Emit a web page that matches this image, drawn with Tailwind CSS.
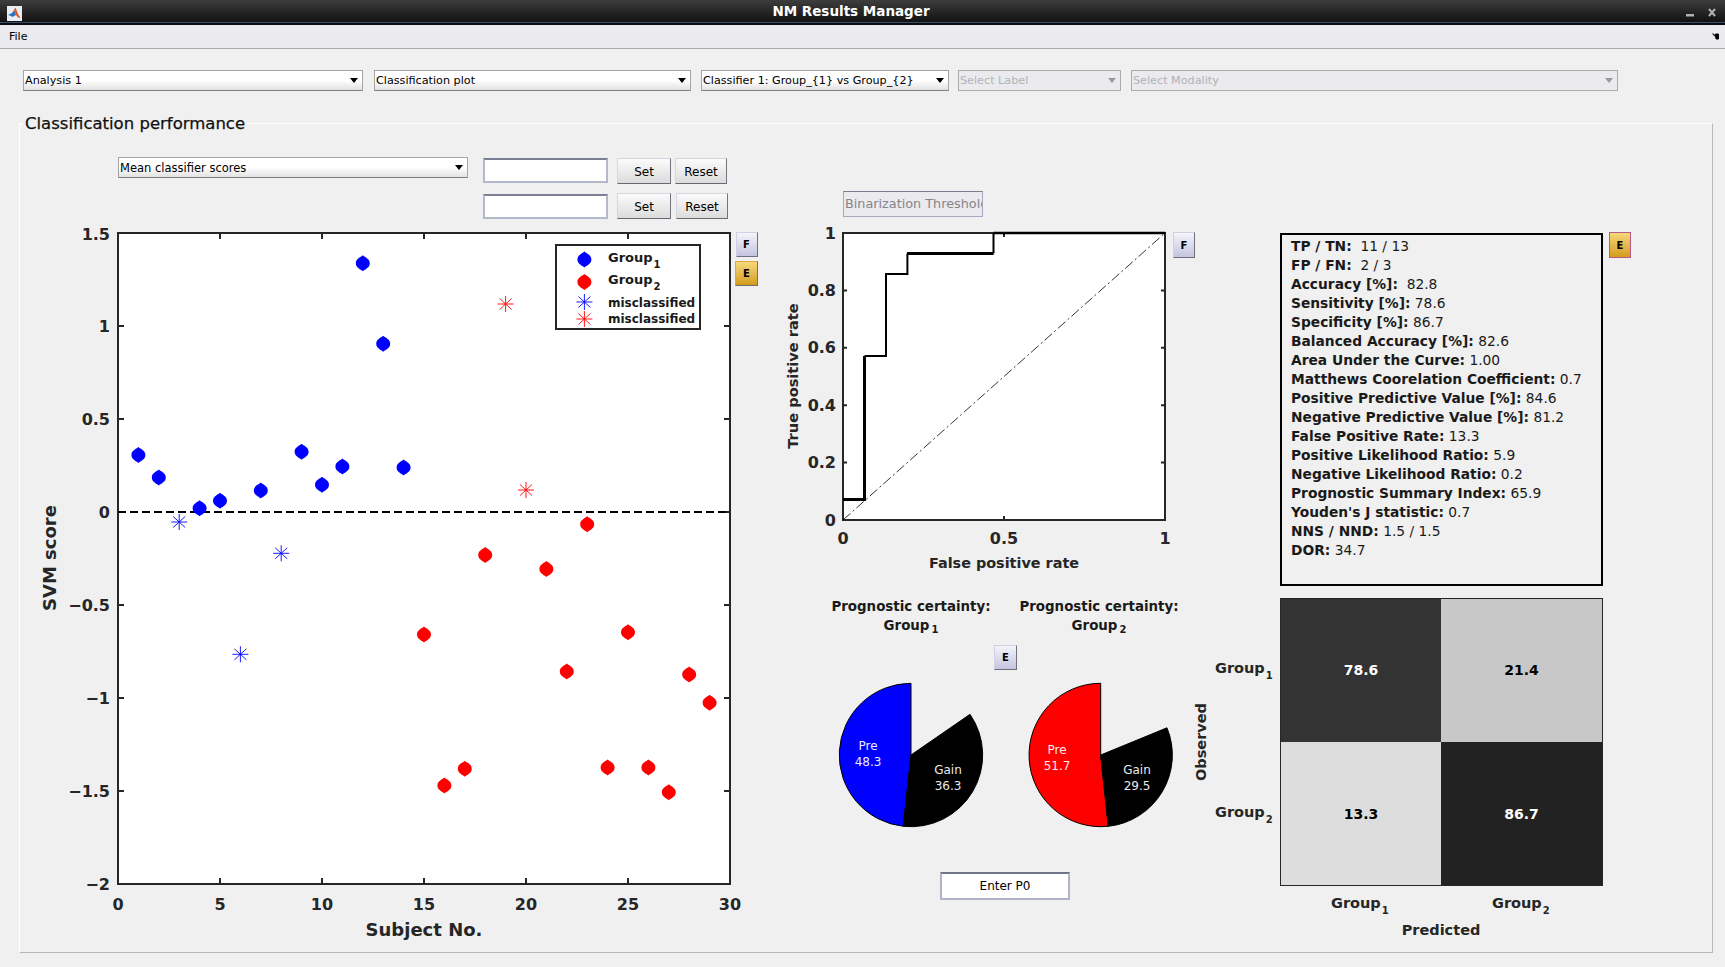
<!DOCTYPE html>
<html lang="en">
<head>
<meta charset="utf-8">
<title>NM Results Manager</title>
<script src="https://cdn.jsdelivr.net/npm/@tailwindcss/browser@4"></script>
</head>
<body class="w-[1725px] h-[967px] overflow-hidden bg-[#f0f0f0] text-black font-['DejaVu_Sans',sans-serif]">

<!-- title bar -->
<header class="relative flex items-center justify-center h-[25px] pr-[23px] pt-[1px] bg-linear-to-b from-[#3e3e3e] to-[#101010] border-b-2 border-b-[#0a0a0a] shadow-[inset_0_-1px_0_#34506e]">
  <div class="absolute left-[7px] top-[6px] w-[15px] h-[15px] bg-[#e8eef6]">
    <svg viewBox="0 0 15 15" class="w-[15px] h-[15px]"><path d="M1 9 L5 7 L7 4 L9 9 L5.5 11 L4 10Z" fill="#2f6fc0"/><path d="M7 4 L8.5 1.5 L11 8 L13.5 12 L11 11.5 L9 9Z" fill="#e2561c"/></svg>
  </div>
  <h1 class="text-[13.5px] leading-none font-bold text-white">NM Results Manager</h1>
  <div class="absolute right-[9px] top-[8px] flex items-end gap-[14px]">
    <svg viewBox="0 0 8 9" class="w-[8px] h-[9px]"><rect x="0" y="6" width="8" height="2.5" fill="#b0b0b0"/></svg>
    <svg viewBox="0 0 8 9" class="w-[8px] h-[9px]"><path d="M1 1 L7 8 M7 1 L1 8" stroke="#b0b0b0" stroke-width="2"/></svg>
  </div>
</header>

<!-- menu bar -->
<nav class="flex items-center justify-between h-[24px] pl-[9px] pr-[6px] bg-[#ebeaee] border-b border-b-[#a8a8a8] text-[11px]">
  <span class="pt-[2px]">File</span>
  <svg viewBox="0 0 7 7" class="w-[7px] h-[7px]"><path d="M0.5 1 L3.5 3.5 M3.5 1 L6.5 1 L6.5 6 L4 6Z M1 0.5 L5 4.5" stroke="#000" stroke-width="1" fill="#000"/></svg>
</nav>

<!-- selector row -->
<div class="flex mt-[21px] ml-[23px] text-[11.2px]">
  <div class="flex items-center justify-between w-[340px] h-[21px] pl-[1px] pr-[4px] bg-linear-to-b from-white via-white to-[#e2e2e2] border border-[#a4a4a4] border-b-[#808080]">
    <span class="pt-[2px]">Analysis 1</span>
    <svg viewBox="0 0 8 5" class="w-[8px] h-[5px]"><path d="M0 0H8L4 5Z" fill="#000"/></svg>
  </div>
  <div class="flex items-center justify-between w-[317px] h-[21px] ml-[11px] pl-[1px] pr-[4px] bg-linear-to-b from-white via-white to-[#e2e2e2] border border-[#a4a4a4] border-b-[#808080]">
    <span class="pt-[2px]">Classification plot</span>
    <svg viewBox="0 0 8 5" class="w-[8px] h-[5px]"><path d="M0 0H8L4 5Z" fill="#000"/></svg>
  </div>
  <div class="flex items-center justify-between w-[248px] h-[21px] ml-[10px] pl-[1px] pr-[4px] bg-linear-to-b from-white via-white to-[#e2e2e2] border border-[#a4a4a4] border-b-[#808080]">
    <span class="pt-[2px]">Classifier 1: Group_{1} vs Group_{2}</span>
    <svg viewBox="0 0 8 5" class="w-[8px] h-[5px]"><path d="M0 0H8L4 5Z" fill="#000"/></svg>
  </div>
  <div class="flex items-center justify-between w-[163px] h-[21px] ml-[9px] pl-[1px] pr-[4px] bg-[#ebeaee] border border-[#ababab] text-[#b2b2b6]">
    <span class="pt-[2px]">Select Label</span>
    <svg viewBox="0 0 8 5" class="w-[8px] h-[5px]"><path d="M0 0H8L4 5Z" fill="#9a9a9e"/></svg>
  </div>
  <div class="flex items-center justify-between w-[487px] h-[21px] ml-[10px] pl-[1px] pr-[4px] bg-[#ebeaee] border border-[#ababab] text-[#b2b2b6]">
    <span class="pt-[2px]">Select Modality</span>
    <svg viewBox="0 0 8 5" class="w-[8px] h-[5px]"><path d="M0 0H8L4 5Z" fill="#9a9a9e"/></svg>
  </div>
</div>

<!-- panel -->
<section class="relative flex w-[1694px] h-[830px] mt-[32px] ml-[19px] border border-t-white border-l-white border-r-[#b8b8b8] border-b-[#b8b8b8]">
  <h2 class="absolute left-[3px] top-[-9px] px-[2px] bg-[#f0f0f0] text-[16.5px] leading-[18px] text-[#101010] [-webkit-text-stroke:0.25px_#101010]">Classification performance</h2>

  <!-- column 1 -->
  <div class="w-[755px] shrink-0 pt-[33px]">
    <div class="flex items-start ml-[98px]">
      <div class="flex items-center justify-between w-[350px] h-[21px] pl-[1px] pr-[4px] text-[11.5px] bg-linear-to-b from-white via-white to-[#e2e2e2] border border-[#a4a4a4] border-b-[#808080]">
        <span class="pt-[2px]">Mean classifier scores</span>
        <svg viewBox="0 0 8 5" class="w-[8px] h-[5px]"><path d="M0 0H8L4 5Z" fill="#000"/></svg>
      </div>
      <div class="w-[125px] h-[25px] ml-[15px] mt-[1px] bg-white border-2 border-[#b4b8cc] border-t-[#7c8094]"></div>
      <button class="w-[54px] h-[26px] ml-[9px] mt-[1px] pt-[1px] text-[12px] bg-linear-to-b from-[#fbfbfb] to-[#dcdcdc] border border-[#d6d6e0] border-r-[#74747e] border-b-[#686872]">Set</button>
      <button class="w-[52px] h-[26px] ml-[4px] mt-[1px] pt-[1px] text-[12px] bg-linear-to-b from-[#fbfbfb] to-[#dcdcdc] border border-[#d6d6e0] border-r-[#74747e] border-b-[#686872]">Reset</button>
    </div>
    <div class="flex items-start ml-[463px] mt-[9px]">
      <div class="w-[125px] h-[25px] mt-[1px] bg-white border-2 border-[#b4b8cc] border-t-[#7c8094]"></div>
      <button class="w-[54px] h-[26px] ml-[9px] pt-[1px] text-[12px] bg-linear-to-b from-[#fbfbfb] to-[#dcdcdc] border border-[#d6d6e0] border-r-[#74747e] border-b-[#686872]">Set</button>
      <button class="w-[52px] h-[26px] ml-[5px] pt-[1px] text-[12px] bg-linear-to-b from-[#fbfbfb] to-[#dcdcdc] border border-[#d6d6e0] border-r-[#74747e] border-b-[#686872]">Reset</button>
    </div>
    <div class="flex items-start mt-[6px]">
      <svg viewBox="20 225 715 725" class="w-[715px] h-[725px] shrink-0 overflow-visible">
        <defs>
          <path id="dot" d="M0-8C1-6.5 7-5 7 0C7 5 1 6.5 0 8C-1 6.5-7 5-7 0C-7-5-1-6.5 0-8Z"/>
          <path id="star" d="M0-8V8M-8 0H8M-6-5.5L6 5.5M-6 5.5L6-5.5" fill="none" stroke-width="0.9"/>
        </defs>
        <rect x="118" y="233" width="612" height="651" fill="#fff" stroke="#262626" stroke-width="2"/>
        <path d="M220 233v6M322 233v6M424 233v6M526 233v6M628 233v6M220 884v-6M322 884v-6M424 884v-6M526 884v-6M628 884v-6M118 326h6M118 419h6M118 512h6M118 605h6M118 698h6M118 791h6M730 326h-6M730 419h-6M730 512h-6M730 605h-6M730 698h-6M730 791h-6" stroke="#262626" stroke-width="2" fill="none"/>
        <path d="M118 512H730" stroke="#000" stroke-width="2" stroke-dasharray="8 4"/>
        <g fill="#0000ff">
          <use href="#dot" x="138.4" y="455.1"/><use href="#dot" x="158.8" y="477.4"/><use href="#dot" x="199.6" y="508.3"/><use href="#dot" x="220" y="500.8"/><use href="#dot" x="260.8" y="490.6"/><use href="#dot" x="301.6" y="451.7"/><use href="#dot" x="322" y="484.7"/><use href="#dot" x="342.4" y="466.6"/><use href="#dot" x="362.8" y="263.3"/><use href="#dot" x="383.2" y="343.7"/><use href="#dot" x="403.6" y="467.4"/>
        </g>
        <g fill="#ff0000">
          <use href="#dot" x="424" y="634.4"/><use href="#dot" x="444.4" y="785.4"/><use href="#dot" x="464.8" y="768.7"/><use href="#dot" x="485.2" y="555"/><use href="#dot" x="546.4" y="568.9"/><use href="#dot" x="566.8" y="671.6"/><use href="#dot" x="587.2" y="524.3"/><use href="#dot" x="607.6" y="767.4"/><use href="#dot" x="628" y="632.3"/><use href="#dot" x="648.4" y="767.4"/><use href="#dot" x="668.8" y="792.3"/><use href="#dot" x="689.2" y="674.6"/><use href="#dot" x="709.6" y="702.8"/>
        </g>
        <g stroke="#0000ff"><use href="#star" x="179.2" y="522"/><use href="#star" x="240.4" y="654.3"/><use href="#star" x="281.2" y="553.3"/></g>
        <g stroke="#ff0000"><use href="#star" x="505.6" y="304"/><use href="#star" x="526" y="490"/></g>

        <!-- legend -->
        <rect x="556" y="245" width="144" height="84" fill="#fff" stroke="#262626" stroke-width="2"/>
        <use href="#dot" x="584.4" y="259.5" fill="#0000ff"/>
        <use href="#dot" x="584.4" y="282" fill="#ff0000"/>
        <use href="#star" x="584.4" y="302" stroke="#0000ff"/>
        <use href="#star" x="584.4" y="319" stroke="#ff0000"/>
        <g font-size="13" font-weight="bold" fill="#1a1a1a">
          <text x="608" y="262">Group<tspan font-size="10" dx="1" dy="6">1</tspan></text>
          <text x="608" y="284">Group<tspan font-size="10" dx="1" dy="6">2</tspan></text>
          <text x="608" y="307" font-size="12">misclassified</text>
          <text x="608" y="323" font-size="12">misclassified</text>
        </g>

        <!-- axes text -->
        <g font-size="16" font-weight="bold" fill="#262626" text-anchor="end">
          <text x="110" y="240">1.5</text>
          <text x="110" y="332">1</text>
          <text x="110" y="425">0.5</text>
          <text x="110" y="518">0</text>
          <text x="110" y="611">−0.5</text>
          <text x="110" y="704">−1</text>
          <text x="110" y="797">−1.5</text>
          <text x="110" y="890">−2</text>
        </g>
        <g font-size="16" font-weight="bold" fill="#262626" text-anchor="middle">
          <text x="118" y="910">0</text>
          <text x="220" y="910">5</text>
          <text x="322" y="910">10</text>
          <text x="424" y="910">15</text>
          <text x="526" y="910">20</text>
          <text x="628" y="910">25</text>
          <text x="730" y="910">30</text>
        </g>
        <text x="424" y="936" font-size="18" font-weight="bold" fill="#262626" text-anchor="middle">Subject No.</text>
        <text transform="translate(56 558) rotate(-90)" font-size="18" font-weight="bold" fill="#262626" text-anchor="middle">SVM score</text>
      </svg>
      <div class="flex flex-col items-center w-[23px] mt-[7px]">
        <button class="w-[22px] h-[25px] text-[10px] font-bold bg-linear-to-b from-[#f4f4fb] to-[#c4c4e0] border border-[#d0d0e4] border-r-[#70707c] border-b-[#70707c]">F</button>
        <button class="w-[23px] h-[25px] mt-[4px] text-[10px] font-bold bg-linear-to-b from-[#f6d878] to-[#d49c10] border border-[#e0a840] border-r-[#70707c] border-b-[#70707c]">E</button>
      </div>
    </div>
  </div>

  <!-- column 2 -->
  <div class="w-[422px] shrink-0 pt-[67px]">
    <div class="w-[140px] h-[26px] ml-[68px] overflow-hidden whitespace-nowrap pl-[1px] leading-[24px] text-[12.8px] text-[#85858d] bg-[#ebeaee] border border-[#a4a8c0] border-t-[#7c7c8c]">Binarization Threshold</div>
    <div class="flex items-start mt-[8px]">
      <svg viewBox="775 225 398 350" class="w-[398px] h-[350px] shrink-0 overflow-visible">
        <rect x="843" y="233" width="322" height="287" fill="#fff" stroke="#262626" stroke-width="2"/>
        <path d="M1004 233v4M1004 520v-4M843 462.6h4M843 405.2h4M843 347.8h4M843 290.4h4M1165 462.6h-4M1165 405.2h-4M1165 347.8h-4M1165 290.4h-4" stroke="#262626" stroke-width="2" fill="none"/>
        <path d="M843 520L1165 233" stroke="#000" stroke-width="0.8" stroke-dasharray="10 3 2 3" fill="none"/>
        <path d="M843 499.5H864.5V356M907 253.5H993.5" stroke="#000" stroke-width="3" fill="none"/>
        <path d="M864.5 356H886V274H907.4V253.5M993.5 253.5V233" stroke="#000" stroke-width="2" fill="none"/>
        <path d="M993.5 233H1165" stroke="#000" stroke-width="2.5" fill="none"/>
        <g font-size="16" font-weight="bold" fill="#262626" text-anchor="end">
          <text x="836" y="239">1</text>
          <text x="836" y="296">0.8</text>
          <text x="836" y="353">0.6</text>
          <text x="836" y="411">0.4</text>
          <text x="836" y="468">0.2</text>
          <text x="836" y="526">0</text>
        </g>
        <g font-size="16" font-weight="bold" fill="#262626" text-anchor="middle">
          <text x="843" y="544">0</text>
          <text x="1004" y="544">0.5</text>
          <text x="1165" y="544">1</text>
        </g>
        <text x="1004" y="568" font-size="14.4" font-weight="bold" fill="#262626" text-anchor="middle">False positive rate</text>
        <text transform="translate(798 376) rotate(-90)" font-size="14.6" font-weight="bold" fill="#262626" text-anchor="middle">True positive rate</text>
      </svg>
      <button class="w-[22px] h-[26px] mt-[7px] text-[10px] font-bold bg-linear-to-b from-[#f4f4fb] to-[#c4c4e0] border border-[#d0d0e4] border-r-[#70707c] border-b-[#70707c]">F</button>
    </div>
    <div class="grid grid-cols-[188px_188px] ml-[42px] mt-[22px] text-center text-[13.4px] leading-[19px] font-bold text-[#1a1a1a]">
      <div>Prognostic certainty:<br>Group<sub class="ml-[2px] text-[10px] leading-none">1</sub></div>
      <div>Prognostic certainty:<br>Group<sub class="ml-[2px] text-[10px] leading-none">2</sub></div>
    </div>
    <button class="block w-[23px] h-[25px] ml-[219px] mt-[10px] text-[10px] font-bold bg-linear-to-b from-[#f4f4fb] to-[#c4c4e0] border border-[#d0d0e4] border-r-[#70707c] border-b-[#70707c]">E</button>
    <svg viewBox="775 675 422 160" class="w-[422px] h-[160px] mt-[5px]">
      <g transform="translate(911 755)" stroke="#000" stroke-width="1">
        <path d="M0 0L0-71.7A71.7 71.7 0 0 0-7.6 71.3Z" fill="#0000ff"/>
        <path d="M0 0L-7.6 71.3A71.7 71.7 0 0 0 59-40.7Z" fill="#000"/>
      </g>
      <g transform="translate(1100.7 755)" stroke="#000" stroke-width="1">
        <path d="M0 0L0-71.7A71.7 71.7 0 1 0 7.6 71.3Z" fill="#ff0000"/>
        <path d="M0 0L7.6 71.3A71.7 71.7 0 0 0 66.3-27.2Z" fill="#000"/>
      </g>
      <g font-size="12" fill="#fff" text-anchor="middle" opacity="0.92">
        <text x="868" y="750">Pre</text>
        <text x="868" y="766">48.3</text>
        <text x="948" y="774">Gain</text>
        <text x="948" y="790">36.3</text>
        <text x="1057" y="754">Pre</text>
        <text x="1057" y="770">51.7</text>
        <text x="1137" y="774">Gain</text>
        <text x="1137" y="790">29.5</text>
      </g>
    </svg>
    <div class="flex items-center justify-center w-[130px] h-[28px] ml-[165px] mt-[37px] text-[12px] bg-white border-2 border-[#b0b4c8] border-t-[#70748a]">Enter P0</div>
  </div>

  <!-- column 3 -->
  <div class="flex-1 pt-[109px]">
    <div class="flex items-start ml-[83px]">
      <ul class="w-[323px] h-[353px] pl-[9px] pt-[2px] border-2 border-black text-[13.8px] leading-[19px] text-[#1a1a1a]">
        <li class="whitespace-pre"><b>TP / TN:</b>  11 / 13</li>
        <li class="whitespace-pre"><b>FP / FN:</b>  2 / 3</li>
        <li class="whitespace-pre"><b>Accuracy [%]:</b>  82.8</li>
        <li class="whitespace-pre"><b>Sensitivity [%]:</b> 78.6</li>
        <li class="whitespace-pre"><b>Specificity [%]:</b> 86.7</li>
        <li class="whitespace-pre"><b>Balanced Accuracy [%]:</b> 82.6</li>
        <li class="whitespace-pre"><b>Area Under the Curve:</b> 1.00</li>
        <li class="whitespace-pre"><b>Matthews Coorelation Coefficient:</b> 0.7</li>
        <li class="whitespace-pre"><b>Positive Predictive Value [%]:</b> 84.6</li>
        <li class="whitespace-pre"><b>Negative Predictive Value [%]:</b> 81.2</li>
        <li class="whitespace-pre"><b>False Positive Rate:</b> 13.3</li>
        <li class="whitespace-pre"><b>Positive Likelihood Ratio:</b> 5.9</li>
        <li class="whitespace-pre"><b>Negative Likelihood Ratio:</b> 0.2</li>
        <li class="whitespace-pre"><b>Prognostic Summary Index:</b> 65.9</li>
        <li class="whitespace-pre"><b>Youden's J statistic:</b> 0.7</li>
        <li class="whitespace-pre"><b>NNS / NND:</b> 1.5 / 1.5</li>
        <li class="whitespace-pre"><b>DOR:</b> 34.7</li>
      </ul>
      <button class="w-[22px] h-[26px] ml-[6px] -mt-px text-[10px] font-bold bg-linear-to-b from-[#f6d878] to-[#d49c10] border border-[#b85a8a]">E</button>
    </div>
    <svg viewBox="1197 590 430 355" class="w-[430px] h-[355px] mt-[4px] overflow-visible">
      <rect x="1280" y="598" width="161" height="144" fill="#333333"/>
      <rect x="1441" y="598" width="162" height="144" fill="#c8c8c8"/>
      <rect x="1280" y="742" width="161" height="144" fill="#dddddd"/>
      <rect x="1441" y="742" width="162" height="144" fill="#222222"/>
      <rect x="1280.5" y="598.5" width="322" height="287" fill="none" stroke="#262626"/>
      <g font-size="14" font-weight="bold" text-anchor="middle">
        <text x="1361" y="675" fill="#fff">78.6</text>
        <text x="1521.5" y="675" fill="#000">21.4</text>
        <text x="1361" y="819" fill="#000">13.3</text>
        <text x="1521.5" y="819" fill="#fff">86.7</text>
      </g>
      <g font-size="14.5" font-weight="bold" fill="#262626">
        <text x="1215" y="673">Group<tspan font-size="10" dx="1" dy="6">1</tspan></text>
        <text x="1215" y="817">Group<tspan font-size="10" dx="1" dy="6">2</tspan></text>
        <text x="1331" y="908">Group<tspan font-size="10" dx="1" dy="6">1</tspan></text>
        <text x="1492" y="908">Group<tspan font-size="10" dx="1" dy="6">2</tspan></text>
        <text x="1441" y="935" text-anchor="middle">Predicted</text>
        <text transform="translate(1206 742) rotate(-90)" text-anchor="middle">Observed</text>
      </g>
    </svg>
  </div>
</section>
</body>
</html>
